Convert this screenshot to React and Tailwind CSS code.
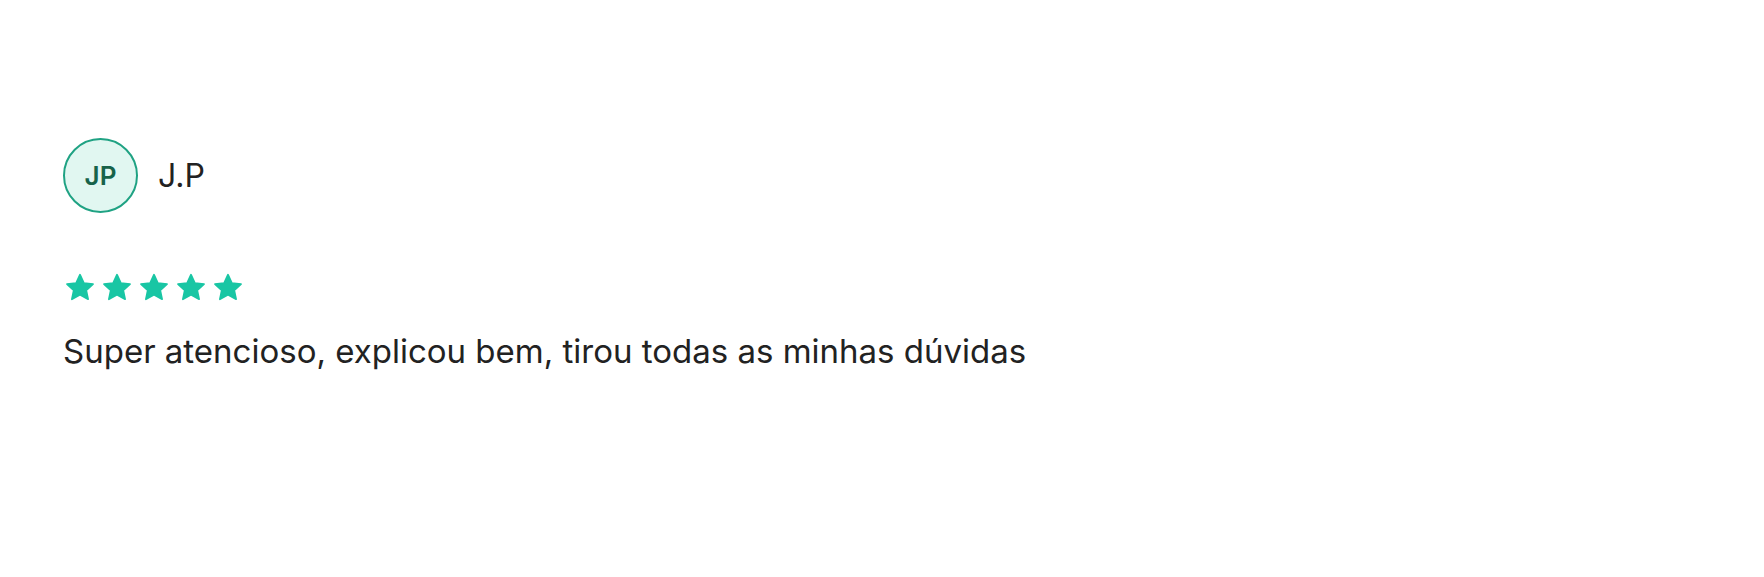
import React from 'react';

const StarIcon = () => (
  <svg width="34" height="34" viewBox="0 0 24 24" className="text-[#19c6a4]">
    <path
      fill="currentColor"
      stroke="currentColor"
      strokeWidth="1.2"
      strokeLinejoin="round"
      d="M12 2.6l2.75 5.9 6.45.7-4.8 4.4 1.33 6.35L12 16.75 6.27 19.95 7.6 13.6 2.8 9.2l6.45-.7z"
    />
  </svg>
);

const App = () => {
  const rating = 5;

  return (
    <div
      className="min-h-[577px] w-full bg-white pl-[63px] pt-[138px]"
      style={{ fontFamily: 'Inter, "Noto Sans", sans-serif' }}
    >
      <div className="flex items-center gap-5">
        <div className="flex h-[75px] w-[75px] items-center justify-center rounded-full border-2 border-[#1fa283] bg-[#e1f7f1]">
          <span className="text-[26px] font-semibold text-[#17634a]">JP</span>
        </div>
        <span className="text-[32px] text-[#222222]">J.P</span>
      </div>

      <div className="mt-[58px] flex gap-[3px]">
        {Array.from({ length: rating }).map((_, i) => (
          <StarIcon key={i} />
        ))}
      </div>

      <p className="mt-[22px] text-[33px] leading-[48px] text-[#222222]">
        Super atencioso, explicou bem, tirou todas as minhas dúvidas
      </p>
    </div>
  );
};

export default App;
